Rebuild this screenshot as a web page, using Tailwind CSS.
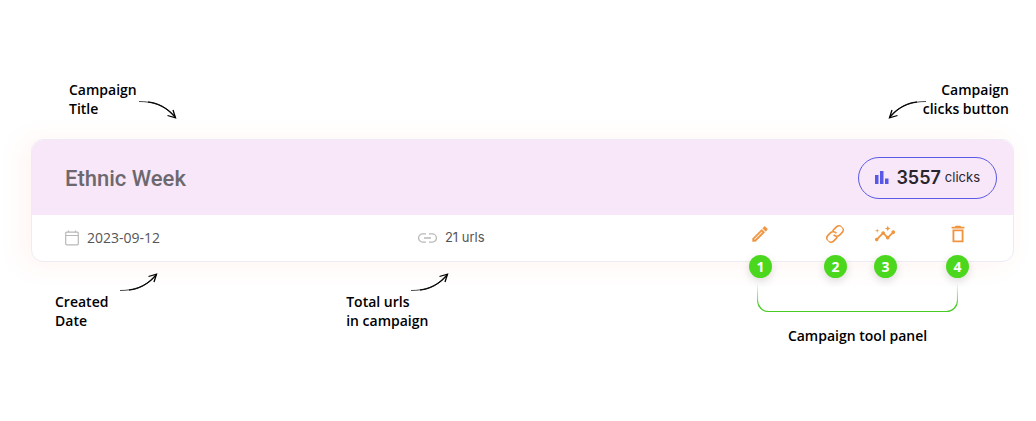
<!DOCTYPE html>
<html lang="en">
<head>
<meta charset="utf-8">
<meta name="viewport" content="width=device-width, initial-scale=1">
<title>Campaign card guide</title>
<script src="https://cdn.jsdelivr.net/npm/@tailwindcss/browser@4"></script>
</head>
<body class="bg-white font-['Open_Sans',sans-serif] text-black">
<svg class="hidden" aria-hidden="true">
  <symbol id="arrow" viewBox="0 0 38 20">
    <path d="M0 1.500C13 1.500 25 5 35.500 16" fill="none" stroke="currentColor" stroke-width=".7"/>
    <path d="M9 2C18 3 27 7 35.500 17L36 16.500C29 8 18 2.300 9 2Z" fill="currentColor" stroke="currentColor" stroke-width=".8"/>
    <path d="M28.500 15.500L36.500 17.800L34 10" fill="none" stroke="currentColor" stroke-width="1.300"/>
  </symbol>
</svg>
<main class="pt-20 pr-[22px] pl-[31px]">
  <div class="flex items-start justify-between pr-[5px] pl-[38px] text-sm leading-[19px] font-semibold">
    <div class="flex items-start gap-[2px]">
      <p>Campaign<br>Title</p>
      <svg class="mt-5 h-5 w-[38px]"><use href="#arrow"/></svg>
    </div>
    <div class="flex items-start">
      <svg class="-mr-[3px] mt-5 h-5 w-[38px] -scale-x-100"><use href="#arrow"/></svg>
      <p class="text-right">Campaign<br>clicks button</p>
    </div>
  </div>

  <section class="mt-[19px] rounded-xl border border-[#eeebf5] bg-white font-['Inter',sans-serif] shadow-[-7px_2px_28px_rgba(255,100,60,0.08)]">
    <header class="flex h-[75px] items-center justify-between rounded-t-xl bg-[#f7e7f8] pr-4 pl-[33px]">
      <h1 class="pt-px font-['Roboto',sans-serif] text-[22px] font-medium text-[#6c686e]">Ethnic Week</h1>
      <button type="button" class="flex h-[42px] items-center rounded-full border border-[#5b5be6] px-4 text-[#29252c]">
        <svg class="mr-[7px] h-[14px] w-[14px]" viewBox="0 0 14 14" fill="#5858e6"><path d="M0 4h3.500v9H0zM5 0h3.500v13H5zM10 7.500h3.500V13H10z"/></svg>
        <strong class="mr-1 text-lg font-semibold">3557</strong><span class="text-[13px]">clicks</span>
      </button>
    </header>
    <div class="grid h-[46px] grid-cols-[39%_1fr_auto] items-center pr-[43px] pl-[33px] text-[13px] text-[#555]">
      <div class="flex items-center gap-2">
        <svg class="h-4 w-[14px]" viewBox="0 0 14 16" fill="none" stroke="#b9b9b9" stroke-width="1.200"><rect x=".7" y="2.200" width="12.600" height="12.600" rx="1"/><path d="M.7 5.500h12.600M3.500.5v2M10.500.5v2"/></svg>
        <time datetime="2023-09-12" class="font-['Open_Sans',sans-serif] text-sm font-medium">2023-09-12</time>
      </div>
      <div class="flex items-center gap-2">
        <svg class="h-[10px] w-[19px]" viewBox="0 0 19 10" fill="none" stroke="#b9b9b9" stroke-width="1.300"><path d="M8 .9H4.700a4.100 4.100 0 0 0 0 8.200H8M11 .9h3.300a4.100 4.100 0 0 1 0 8.200H11M6 5h7"/></svg>
        <span>21 urls</span>
      </div>
      <div class="flex self-start pt-[7px] text-[#f09440]">
        <button type="button" aria-label="Edit campaign" class="relative mr-[51px] grid size-6 place-items-center">
          <svg class="size-5" viewBox="0 0 24 24" fill="currentColor" stroke="currentColor" stroke-width=".4"><path d="m14.060 9.020.92.920L5.920 19H5v-.92l9.060-9.060M17.660 3c-.25 0-.51.100-.7.290l-1.830 1.830 3.750 3.750 1.830-1.830a.996.996 0 0 0 0-1.410l-2.340-2.340c-.2-.2-.45-.29-.71-.29zm-3.600 3.190L3 17.250V21h3.750L17.810 9.940l-3.750-3.750z"/></svg>
          <span class="absolute top-[33px] left-[1px] grid size-[23px] place-items-center rounded-full bg-[#4cd71f] font-['Open_Sans',sans-serif] text-sm font-bold text-white shadow-[0_3px_8px_rgba(0,0,0,0.14)]">1</span>
        </button>
        <button type="button" aria-label="Copy link" class="relative mr-[26px] grid size-6 place-items-center">
          <svg class="size-5 -rotate-45" viewBox="0 0 20 20" fill="none" stroke="currentColor" stroke-width="1.700"><path d="M9.500 13.500a3.600 3.600 0 0 1-2 .5H4a4 4 0 0 1 0-8h3.500a4 4 0 0 1 4 4.500"/><path d="M10.500 6.500a3.600 3.600 0 0 1 2-.5H16a4 4 0 0 1 0 8h-3.500a4 4 0 0 1-4-4.500"/></svg>
          <span class="absolute top-[33px] left-[1px] grid size-[23px] place-items-center rounded-full bg-[#4cd71f] font-['Open_Sans',sans-serif] text-sm font-bold text-white shadow-[0_3px_8px_rgba(0,0,0,0.14)]">2</span>
        </button>
        <button type="button" aria-label="Campaign insights" class="relative mr-[49px] grid size-6 place-items-center">
          <svg class="size-[22px]" viewBox="0 0 24 24" fill="currentColor"><path d="M21 8c-1.450 0-2.260 1.440-1.930 2.510l-3.550 3.560c-.3-.09-.74-.09-1.040 0l-2.550-2.550C12.270 10.450 11.460 9 10 9c-1.450 0-2.270 1.440-1.930 2.520l-4.560 4.550C2.440 15.740 1 16.550 1 18c0 1.100.9 2 2 2 1.450 0 2.260-1.440 1.930-2.510l4.550-4.560c.3.090.74.090 1.040 0l2.550 2.550C12.730 16.550 13.540 18 15 18c1.450 0 2.270-1.440 1.930-2.520l3.560-3.550C21.560 12.260 23 11.450 23 10c0-1.100-.9-2-2-2z"/><path d="m15 9 .94-2.070L18 6l-2.060-.93L15 3l-.92 2.070L12 6l2.080.93zM3.500 11 4 9l2-.5L4 8l-.5-2L3 8l-2 .5L3 9z"/></svg>
          <span class="absolute top-[33px] left-[1px] grid size-[23px] place-items-center rounded-full bg-[#4cd71f] font-['Open_Sans',sans-serif] text-sm font-bold text-white shadow-[0_3px_8px_rgba(0,0,0,0.14)]">3</span>
        </button>
        <button type="button" aria-label="Delete campaign" class="relative grid size-6 place-items-center">
          <svg class="size-[22px]" viewBox="0 0 24 24" fill="currentColor"><path d="M6 21h12V7H6v14zM8 9h8v10H8V9zm7.500-5-1-1h-5l-1 1H5v2h14V4z"/></svg>
          <span class="absolute top-[33px] left-0 grid size-[23px] place-items-center rounded-full bg-[#4cd71f] font-['Open_Sans',sans-serif] text-sm font-bold text-white shadow-[0_3px_8px_rgba(0,0,0,0.14)]">4</span>
        </button>
      </div>
    </div>
  </section>

  <div class="grid grid-cols-[34%_1fr_auto] items-start pr-14 text-sm leading-[19px] font-semibold">
    <div class="flex items-start gap-3 pt-[10px] pl-6">
      <p class="pt-5">Created<br>Date</p>
      <svg class="h-5 w-[38px] -scale-y-100"><use href="#arrow"/></svg>
    </div>
    <div class="flex items-start pt-[10px]">
      <p class="pt-5">Total urls<br>in campaign</p>
      <svg class="-ml-[17px] h-5 w-[38px] -scale-y-100"><use href="#arrow"/></svg>
    </div>
    <div class="pt-[21px] text-center">
      <svg class="h-[30px] w-[201px]" viewBox="0 0 201 30" fill="none">
        <defs><linearGradient id="fade" x1="0" y1="0" x2="0" y2="28" gradientUnits="userSpaceOnUse"><stop stop-color="#4cd71f" stop-opacity="0"/><stop offset=".8" stop-color="#49cb26"/></linearGradient></defs>
        <path d="M.5 0v17.500a11 11 0 0 0 11 11h178a11 11 0 0 0 11-11V0" stroke="url(#fade)" stroke-width="1.200"/>
      </svg>
      <p class="pt-[13px]">Campaign tool panel</p>
    </div>
  </div>
</main>
</body>
</html>
